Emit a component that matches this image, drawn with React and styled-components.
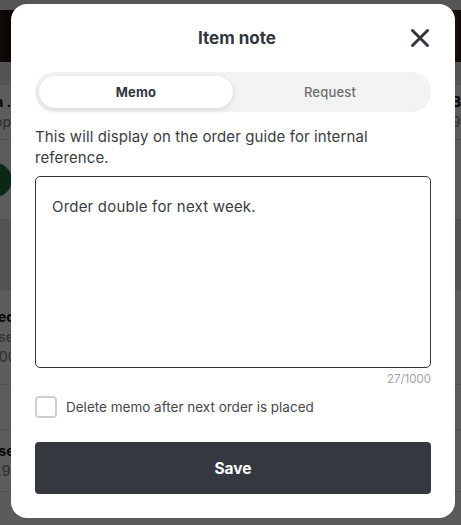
import React, { useState } from 'react';
import styled, { createGlobalStyle } from 'styled-components';

const GlobalStyle = createGlobalStyle`
  html, body { margin: 0; padding: 0; }
  body {
    font-family: 'Inter', 'Noto Sans', sans-serif;
    background: #fff;
    width: 461px;
    height: 525px;
    overflow: hidden;
  }
  * { box-sizing: border-box; }
`;

const Page = styled.div`
  position: relative;
  width: 461px;
  height: 525px;
  overflow: hidden;
  background: #f6f6f6;
`;

const BgList = styled.div`
  display: flex;
  flex-direction: column;
`;

const BgHeader = styled.div`
  height: 10px;
  background: #e6e6e6;
`;

const BgPhoto = styled.div`
  height: 52px;
  background: linear-gradient(90deg, #2a1e18 0%, #120c09 3%, #e8e8e8 3%, #e8e8e8 97.5%, #5a3f2e 97.5%, #2a1d16 100%);
`;

const BgRow = styled.div`
  height: ${p => p.h}px;
  border-bottom: 1px solid #dcdcdc;
  background: ${p => p.bg || '#fafafa'};
  display: flex;
  justify-content: space-between;
  align-items: center;
`;

const BgText = styled.div`
  display: flex;
  flex-direction: column;
  gap: 4px;
  margin-left: ${p => p.shift || 0}px;
  font-size: 14px;
  font-weight: 700;
  color: #111;
  line-height: 16px;
  span + span {
    font-weight: 500;
    color: #888;
  }
`;

const GreenDot = styled.span`
  width: 34px;
  height: 34px;
  margin-left: -22px;
  border-radius: 50%;
  background: #1f6b3c;
`;

const Overlay = styled.div`
  position: absolute;
  inset: 0;
  background: rgba(0, 0, 0, 0.63);
`;

const Modal = styled.div`
  position: absolute;
  left: 11px;
  top: 4px;
  width: 444px;
  height: 514px;
  background: #fff;
  border-radius: 16px;
  padding: 20px 24px 0;
  display: flex;
  flex-direction: column;
  color: #33363d;
`;

const Header = styled.div`
  position: relative;
  height: 28px;
  padding-left: 8px;
  display: flex;
  align-items: center;
  justify-content: center;
`;

const Title = styled.h2`
  margin: 0;
  font-size: 17px;
  font-weight: 700;
  color: #33363d;
`;

const Close = styled.button`
  position: absolute;
  right: 1px;
  top: 4px;
  width: 20px;
  height: 20px;
  padding: 0;
  border: 0;
  background: none;
  cursor: pointer;
  display: flex;
`;

const Tabs = styled.div`
  margin-top: 20px;
  height: 40px;
  border-radius: 20px;
  background: #f2f4f2;
  padding: 4px;
  display: grid;
  grid-template-columns: 1fr 1fr;
`;

const Tab = styled.button`
  border: 0;
  border-radius: 16px;
  font-family: inherit;
  font-size: 13px;
  letter-spacing: 0.2px;
  font-weight: ${p => (p.active ? 700 : 500)};
  color: ${p => (p.active ? '#33363d' : '#6e6e6e')};
  background: ${p => (p.active ? '#fff' : 'transparent')};
  box-shadow: ${p => (p.active ? '0 2px 6px rgba(0,0,0,0.12)' : 'none')};
  cursor: pointer;
`;

const Description = styled.p`
  margin: 14px 0 0;
  font-size: 15px;
  letter-spacing: 0.1px;
  line-height: 21px;
  color: #3b3d42;
`;

const TextArea = styled.textarea`
  margin-top: 8px;
  height: 192px;
  width: 100%;
  resize: none;
  border: 1px solid #33363d;
  border-radius: 5px;
  padding: 20px 16px;
  font-family: inherit;
  font-size: 15px;
  letter-spacing: 0.2px;
  color: #3b3d42;
  outline: none;
`;

const Counter = styled.div`
  margin-top: 4px;
  text-align: right;
  font-size: 11.5px;
  color: #a3a3a3;
`;

const CheckRow = styled.label`
  margin-top: 10px;
  display: flex;
  align-items: center;
  gap: 9px;
  font-size: 13.5px;
  color: #46484d;
  cursor: pointer;
`;

const Box = styled.span`
  width: 22px;
  height: 22px;
  border: 2px solid #d0d0d0;
  border-radius: 4px;
  background: ${p => (p.checked ? '#33363d' : '#fff')};
`;

const SaveButton = styled.button`
  margin-top: 24px;
  height: 52px;
  width: 100%;
  border: 0;
  border-radius: 4px;
  background: #363840;
  color: #fff;
  font-family: inherit;
  font-size: 15.5px;
  font-weight: 700;
  cursor: pointer;
`;

export default function App() {
  const [tab, setTab] = useState('memo');
  const [text, setText] = useState('Order double for next week.');
  const [checked, setChecked] = useState(false);

  return (
    <Page>
      <GlobalStyle />
      <BgList>
        <BgHeader />
        <BgPhoto />
        <BgRow h={23} bg="#e4e4e4" />
        <BgRow h={55}>
          <BgText shift={-14}><span>Sa …</span><span>Top</span></BgText>
          <BgText><span>B</span><span>9</span></BgText>
        </BgRow>
        <BgRow h={80}><GreenDot /></BgRow>
        <BgRow h={70} bg="#e2e2e2" />
        <BgRow h={95}>
          <BgText shift={-20}><span>Spec</span><span>Case ·</span><span>$1.00</span></BgText>
        </BgRow>
        <BgRow h={45} />
        <BgRow h={62}>
          <BgText shift={-20}><span>Case ·</span><span>$8.9</span></BgText>
        </BgRow>
      </BgList>
      <Overlay />
      <Modal>
        <Header>
          <Title>Item note</Title>
          <Close aria-label="Close">
            <svg width="20" height="20" viewBox="0 0 20 20">
              <path d="M2.5 2.5 L17.5 17.5 M17.5 2.5 L2.5 17.5" stroke="#33363d" strokeWidth="3" strokeLinecap="round" />
            </svg>
          </Close>
        </Header>
        <Tabs>
          <Tab active={tab === 'memo'} onClick={() => setTab('memo')}>Memo</Tab>
          <Tab active={tab === 'request'} onClick={() => setTab('request')}>Request</Tab>
        </Tabs>
        <Description>This will display on the order guide for internal reference.</Description>
        <TextArea value={text} maxLength={1000} onChange={e => setText(e.target.value)} />
        <Counter>{text.length}/1000</Counter>
        <CheckRow onClick={() => setChecked(!checked)}>
          <Box checked={checked} />
          Delete memo after next order is placed
        </CheckRow>
        <SaveButton>Save</SaveButton>
      </Modal>
    </Page>
  );
}
